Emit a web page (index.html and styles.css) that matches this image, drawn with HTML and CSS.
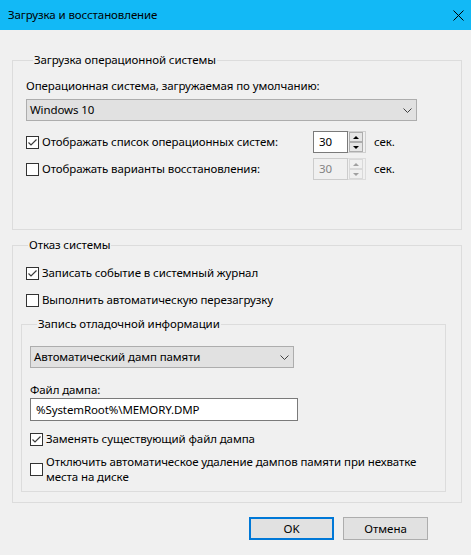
FILE: index.html
```html
<!DOCTYPE html>
<html lang="ru">
<head>
<meta charset="utf-8">
<title>Загрузка и восстановление</title>
<link rel="stylesheet" href="styles.css">
</head>
<body>
<div class="titlebar">
  <span class="title">Загрузка и восстановление</span>
  <svg class="close" viewBox="0 0 11 11" width="11" height="11"><path d="M0.5 0.5 L10.5 10.5 M10.5 0.5 L0.5 10.5" stroke="#000" stroke-width="1" fill="none"/></svg>
</div>

<fieldset class="group g1">
  <legend>Загрузка операционной системы</legend>
  <div class="label first">Операционная система, загружаемая по умолчанию:</div>
  <div class="combo combo-os">
    <span>Windows 10</span>
    <svg class="chev" viewBox="0 0 9 5" width="9" height="5"><path d="M0.5 0.5 L4.5 4.5 L8.5 0.5" stroke="#404040" fill="none"/></svg>
  </div>
  <div class="timer-row r1">
    <label class="check"><span class="box checked"><svg viewBox="0 0 13 13" width="13" height="13"><path d="M2.5 6.5 L5 9 L10.5 3.5" stroke="#3c3c3c" stroke-width="1.2" fill="none"/></svg></span>Отображать список операционных систем:</label>
    <div class="spin">
      <div class="spin-edit">30</div>
      <div class="spin-btns"><span class="sb up"><i></i></span><span class="sb down"><i></i></span></div>
    </div>
    <span class="unit">сек.</span>
  </div>
  <div class="timer-row r2">
    <label class="check"><span class="box"></span>Отображать варианты восстановления:</label>
    <div class="spin disabled">
      <div class="spin-edit">30</div>
      <div class="spin-btns"><span class="sb up"><i></i></span><span class="sb down"><i></i></span></div>
    </div>
    <span class="unit">сек.</span>
  </div>
</fieldset>

<fieldset class="group g2">
  <legend>Отказ системы</legend>
  <label class="check row-log"><span class="box checked"><svg viewBox="0 0 13 13" width="13" height="13"><path d="M2.5 6.5 L5 9 L10.5 3.5" stroke="#3c3c3c" stroke-width="1.2" fill="none"/></svg></span>Записать событие в системный журнал</label>
  <label class="check row-reboot"><span class="box"></span>Выполнить автоматическую перезагрузку</label>

  <fieldset class="subgroup">
    <legend>Запись отладочной информации</legend>
    <div class="combo combo-dump">
      <span>Автоматический дамп памяти</span>
      <svg class="chev" viewBox="0 0 9 5" width="9" height="5"><path d="M0.5 0.5 L4.5 4.5 L8.5 0.5" stroke="#404040" fill="none"/></svg>
    </div>
    <div class="label file-label">Файл дампа:</div>
    <div class="textbox">%SystemRoot%\MEMORY.DMP</div>
    <label class="check row-overwrite"><span class="box checked"><svg viewBox="0 0 13 13" width="13" height="13"><path d="M2.5 6.5 L5 9 L10.5 3.5" stroke="#3c3c3c" stroke-width="1.2" fill="none"/></svg></span>Заменять существующий файл дампа</label>
    <label class="check multi row-disable"><span class="box"></span><span class="multi-text">Отключить автоматическое удаление дампов памяти при нехватке места на диске</span></label>
  </fieldset>
</fieldset>

<div class="buttons">
  <button class="btn default">OK</button>
  <button class="btn">Отмена</button>
</div>
</body>
</html>
```

FILE: styles.css
```css
* { box-sizing: border-box; }
html, body { margin: 0; padding: 0; }
body {
  background: #f0f0f0;
  font-family: "Noto Sans", "Segoe UI", sans-serif;
  font-size: 11.5px;
  letter-spacing: -0.1px;
  line-height: 16px;
  color: #000;
  width: 471px;
  height: 555px;
  overflow: hidden;
}

.titlebar {
  height: 30px;
  background: #12b9f6;
  display: flex;
  align-items: center;
  justify-content: space-between;
  padding: 0 7px 0 8px;
}
.close { display: block; }

.group, .subgroup {
  border: 1px solid #dcdcdc;
  margin: 0;
  min-width: 0;
}
.group legend, .subgroup legend {
  margin-left: 7px;
  padding: 0 1px;
  line-height: 16px;
}
.group { margin-left: 12px; width: 450px; }

.g1 { margin-top: 22px; padding: 0 0 49px 13px; }
.g2 { margin-top: 7px; padding: 0 0 10px 8px; }
.subgroup { margin-top: 8px; width: 425px; padding: 0 0 7px 8px; }

.label.first { margin-top: 10px; }

.combo {
  height: 22px;
  background: #e1e1e1;
  border: 1px solid #adadad;
  display: flex;
  align-items: center;
  justify-content: space-between;
  padding: 0 4px 0 3px;
}
.chev { display: block; }
.combo-os { margin-top: 5px; width: 391px; }
.combo-dump { margin-top: 14px; width: 264px; }

.timer-row {
  display: grid;
  grid-template-columns: 279px 53px auto;
  column-gap: 8px;
  align-items: center;
  height: 22px;
}
.timer-row.r1 { margin-top: 10px; }
.timer-row.r2 { margin-top: 5px; }

.check {
  display: flex;
  align-items: center;
}
.box {
  width: 13px;
  height: 13px;
  border: 1px solid #333;
  background: #fff;
  margin-right: 3px;
  flex: none;
  position: relative;
}
.box svg { position: absolute; left: -1px; top: -1px; }

.row-log { margin-top: 12px; padding-left: 5px; }
.row-reboot { margin-top: 11px; padding-left: 5px; }

.spin {
  display: flex;
  height: 22px;
}
.spin-edit {
  width: 35px;
  height: 22px;
  border: 1px solid #7a7a7a;
  background: #fff;
  padding-left: 5px;
  line-height: 20px;
}
.spin-btns {
  width: 18px;
  height: 22px;
  border: 1px solid #cfcfcf;
  border-left: none;
  padding: 0 2px 0 1px;
  display: flex;
  flex-direction: column;
}
.sb {
  flex: 1;
  background: #e6e6e6;
  border: 1px solid #adadad;
  display: flex;
  align-items: center;
  justify-content: center;
}
.sb i {
  width: 0; height: 0;
  border-left: 3px solid transparent;
  border-right: 3px solid transparent;
}
.sb.up i { border-bottom: 3px solid #000; }
.sb.down i { border-top: 3px solid #000; }

.spin.disabled .spin-edit { border-color: #cccccc; background: #f0f0f0; color: #838383; }
.spin.disabled .spin-btns { border-color: #dcdcdc; }
.spin.disabled .sb { background: #f0f0f0; border-color: #d9d9d9; }
.spin.disabled .sb.up i { border-bottom-color: #a0a0a0; }
.spin.disabled .sb.down i { border-top-color: #a0a0a0; }

.file-label { margin-top: 14px; }
.textbox {
  width: 268px;
  height: 23px;
  background: #fff;
  border: 1px solid #7a7a7a;
  padding-left: 5px;
  line-height: 21px;
}
.row-overwrite { margin-top: 10px; }
.row-disable { margin-top: 7px; }
.multi-text { width: 378px; line-height: 15px; }

.buttons {
  display: flex;
  justify-content: flex-end;
  gap: 9px;
  padding-right: 43px;
  margin-top: 14px;
}
.btn {
  width: 85px;
  height: 23px;
  background: #e1e1e1;
  border: 1px solid #adadad;
  font: inherit;
  color: #000;
  padding: 0;
}
.btn.default { border: 2px solid #0078d7; }
```
